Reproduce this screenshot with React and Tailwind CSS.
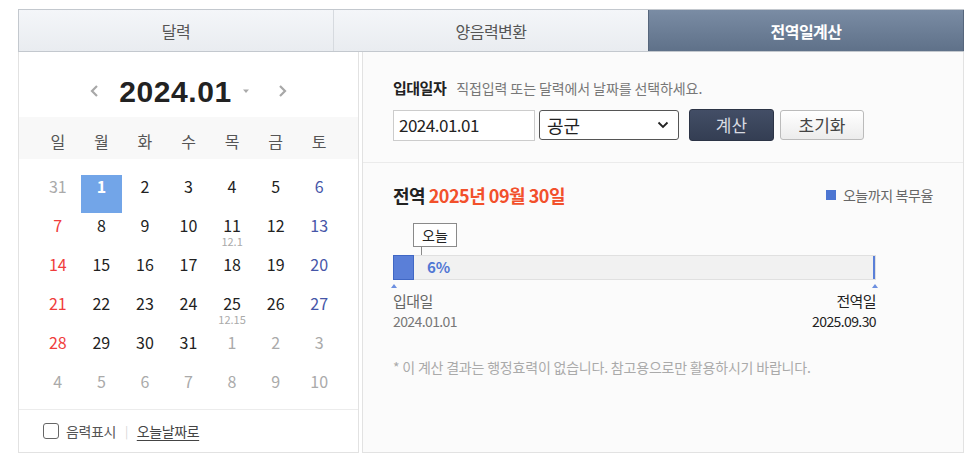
import React from 'react';

const KR = { fontFamily: '"Noto Sans CJK KR", "Noto Sans", sans-serif' };

const weeks = [
  [{ d: 31, o: true }, { d: 1, sel: true }, { d: 2 }, { d: 3 }, { d: 4 }, { d: 5 }, { d: 6 }],
  [{ d: 7 }, { d: 8 }, { d: 9 }, { d: 10 }, { d: 11, l: '12.1' }, { d: 12 }, { d: 13 }],
  [{ d: 14 }, { d: 15 }, { d: 16 }, { d: 17 }, { d: 18 }, { d: 19 }, { d: 20 }],
  [{ d: 21 }, { d: 22 }, { d: 23 }, { d: 24 }, { d: 25, l: '12.15' }, { d: 26 }, { d: 27 }],
  [{ d: 28 }, { d: 29 }, { d: 30 }, { d: 31 }, { d: 1, o: true }, { d: 2, o: true }, { d: 3, o: true }],
  [{ d: 4, o: true }, { d: 5, o: true }, { d: 6, o: true }, { d: 7, o: true }, { d: 8, o: true }, { d: 9, o: true }, { d: 10, o: true }],
];

const weekdays = ['일', '월', '화', '수', '목', '금', '토'];

function dayColor(cell, idx) {
  if (cell.sel) return 'text-white font-bold';
  if (cell.o) return 'text-[#aaaaaa]';
  if (idx === 0) return 'text-[#f03c3c]';
  if (idx === 6) return 'text-[#4656a8]';
  return 'text-[#222222]';
}

export default function App() {
  return (
    <div className="w-[977px] h-[462px] bg-white pt-[9px] pl-[18px]" style={KR}>
      <div className="w-[946px]">
        {/* Tabs */}
        <div className="flex h-[43px] border-t border-b border-[#c3c8ce]">
          <div className="flex-1 flex items-center justify-center border-l border-[#c3c8ce] bg-gradient-to-b from-[#f4f6f9] to-[#e9ecf0] text-[16px] text-[#555] tracking-[-0.5px]">
            달력
          </div>
          <div className="flex-1 flex items-center justify-center border-l border-[#d6dadf] bg-gradient-to-b from-[#f4f6f9] to-[#e9ecf0] text-[16px] text-[#555] tracking-[-0.5px]">
            양음력변환
          </div>
          <div className="flex-1 flex items-center justify-center border-x border-[#56667c] bg-gradient-to-b from-[#7a8ca4] to-[#5f7189] text-[16px] font-bold text-white tracking-[-0.5px]">
            전역일계산
          </div>
        </div>

        <div className="flex h-[401px]">
          {/* Calendar panel */}
          <div className="w-[341px] border-l border-r border-b border-[#e2e2e2] flex flex-col">
            <div className="h-[65px] flex items-center justify-center pt-[14px] gap-[12px]">
              <svg width="12" height="14" viewBox="0 0 12 14" className="mr-[6px]">
                <path d="M8 2 L3 7 L8 12" stroke="#a8a8a8" strokeWidth="2.2" fill="none" />
              </svg>
              <span className="text-[30px] font-bold text-[#222] tracking-[0.6px]" style={{ fontFamily: '"Liberation Sans", Arial, sans-serif' }}>
                2024.01
              </span>
              <svg width="8" height="6" viewBox="0 0 8 6" className="-ml-[2px]">
                <path d="M1 1.5 L7 1.5 L4 5 Z" fill="#aaaaaa" />
              </svg>
              <svg width="12" height="14" viewBox="0 0 12 14" className="ml-[14px]">
                <path d="M4 2 L9 7 L4 12" stroke="#a8a8a8" strokeWidth="2.2" fill="none" />
              </svg>
            </div>
            <div className="h-[43px] bg-[#f8f8f8] px-[17px] grid grid-cols-7 items-center pt-[7px]">
              {weekdays.map((w) => (
                <div key={w} className="text-center text-[16px] text-[#555]">{w}</div>
              ))}
            </div>
            <div className="px-[17px] pt-[16px]">
              {weeks.map((row, ri) => (
                <div key={ri} className="grid grid-cols-7 h-[39px]">
                  {row.map((c, ci) => (
                    <div key={ci} className="h-[39px]">
                      <div className={`mx-[1px] h-[38px] flex flex-col items-center pt-[2px] ${c.sel ? 'bg-[#72a5e8]' : ''}`}>
                        <span className={`text-[16px] leading-[18px] ${dayColor(c, ci)}`}>{c.d}</span>
                        {c.l && <span className="mt-[1px] text-[11px] leading-[12px] text-[#aaaaaa]">{c.l}</span>}
                      </div>
                    </div>
                  ))}
                </div>
              ))}
            </div>
            <div className="mt-auto h-[43px] border-t border-[#ececec] flex items-center pl-[24px] text-[14px] tracking-[-0.4px]">
              <span className="w-[16px] h-[16px] border-[1.5px] border-[#666] rounded-[3px] bg-white mr-[7px]" />
              <span className="text-[#555]">음력표시</span>
              <span className="mx-[9px] text-[#d5d5d5] text-[12px]">|</span>
              <span className="text-[#444] underline underline-offset-[3px]">오늘날짜로</span>
            </div>
          </div>

          {/* Result panel */}
          <div className="ml-[3px] flex-1 border-l border-r border-b border-[#e2e2e2] bg-[#fbfbfb] flex flex-col">
            <div className="px-[30px] pt-[26px] pb-[21px] border-b border-[#ebebeb]">
              <div className="flex items-baseline h-[20px] leading-[20px]">
                <span className="text-[15px] font-bold text-[#222] tracking-[-0.5px]">입대일자</span>
                <span className="ml-[10px] text-[14px] text-[#777] tracking-[-0.1px]">직접입력 또는 달력에서 날짜를 선택하세요.</span>
              </div>
              <div className="mt-[11px] flex items-center h-[32px]">
                <div className="w-[142px] h-[31px] border border-[#cccccc] bg-white flex items-center pl-[5px] text-[17px] text-[#222] tracking-[-0.5px]">
                  2024.01.01
                </div>
                <div className="ml-[4px] w-[140px] h-[30px] border border-[#555] rounded-[3px] bg-white flex items-center justify-between pl-[7px] pr-[9px]">
                  <span className="text-[18px] text-[#222]">공군</span>
                  <svg width="12" height="8" viewBox="0 0 12 8">
                    <path d="M1.5 1.5 L6 6 L10.5 1.5" stroke="#222" strokeWidth="1.8" fill="none" />
                  </svg>
                </div>
                <div className="ml-[10px] w-[85px] h-[32px] rounded-[3px] bg-gradient-to-b from-[#434e66] to-[#343e53] border border-[#2c3446] flex items-center justify-center text-[17px] text-[#d8dbe2]">
                  계산
                </div>
                <div className="ml-[6px] w-[84px] h-[30px] rounded-[3px] bg-gradient-to-b from-[#ffffff] to-[#ececec] border border-[#bbbbbb] flex items-center justify-center text-[17px] text-[#444]">
                  초기화
                </div>
              </div>
            </div>

            <div className="px-[30px] pt-[21px]">
              <div className="flex items-center justify-between h-[22px]">
                <div className="text-[18px] font-bold tracking-[-0.5px]">
                  <span className="text-[#222]">전역</span>{' '}
                  <span className="text-[#f2502b]">2025년 09월 30일</span>
                </div>
                <div className="flex items-center text-[14px] text-[#666] tracking-[-0.4px]">
                  <span className="w-[10px] h-[10px] bg-[#4d76d2] mr-[7px]" />
                  오늘까지 복무율
                </div>
              </div>

              <div className="w-[483px] mt-[17px]">
                <div className="ml-[20px] w-[44px] h-[24px] border border-[#8a8a8a] bg-white flex items-center justify-center text-[14px] text-[#222] leading-none">
                  오늘
                </div>
                <div className="ml-[28px] w-[1px] h-[8px] bg-[#8a8a8a]" />
                <div className="relative h-[25px] bg-[#f1f1f1] border border-[#e0e0e0] flex items-center">
                  <div className="w-[21px] h-[25px] bg-[#5a7fd8] border border-[#4067c4] -ml-[1px]" />
                  <span className="ml-[13px] text-[15px] font-bold text-[#5077d4]">6%</span>
                  <div className="absolute right-[0px] top-0 bottom-0 w-[2px] bg-[#5a7fd8]" />
                </div>
                <div className="flex justify-between mt-[4px] h-[4px]">
                  <span className="w-0 h-0 border-l-[3px] border-r-[3px] border-b-[4px] border-l-transparent border-r-transparent border-b-[#6c8fe0] -ml-[2px]" />
                  <span className="w-0 h-0 border-l-[3px] border-r-[3px] border-b-[4px] border-l-transparent border-r-transparent border-b-[#6c8fe0] -mr-[2px]" />
                </div>
                <div className="flex justify-between mt-[2px] tracking-[-0.6px]">
                  <div className="flex flex-col">
                    <span className="text-[15px] leading-[22px] text-[#666]">입대일</span>
                    <span className="text-[14px] leading-[18px] text-[#777]">2024.01.01</span>
                  </div>
                  <div className="flex flex-col items-end">
                    <span className="text-[15px] leading-[22px] text-[#222]">전역일</span>
                    <span className="text-[14px] leading-[18px] text-[#222]">2025.09.30</span>
                  </div>
                </div>
              </div>

              <div className="mt-[27px] text-[14px] text-[#aaaaaa] tracking-[-0.2px]">
                * 이 계산 결과는 행정효력이 없습니다. 참고용으로만 활용하시기 바랍니다.
              </div>
            </div>
          </div>
        </div>
      </div>
    </div>
  );
}
